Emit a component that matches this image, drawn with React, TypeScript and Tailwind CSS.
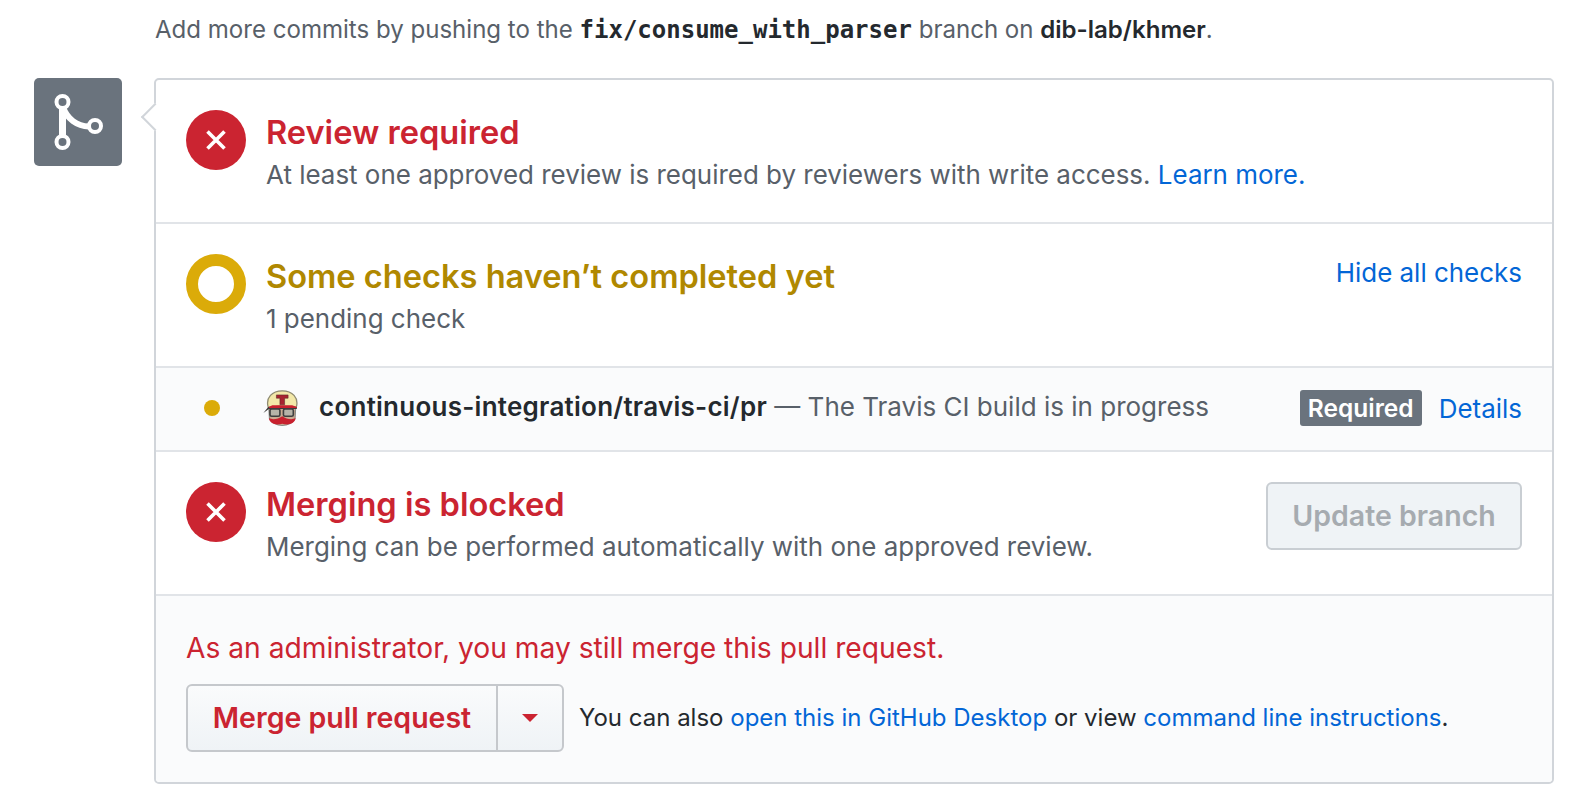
import React from "react";

function XCircle() {
  return (
    <div className="w-[60px] h-[60px] rounded-full bg-[#cb2431] flex items-center justify-center shrink-0">
      <svg width="22" height="22" viewBox="0 0 22 22">
        <path d="M2.5 2.5 L19.5 19.5 M19.5 2.5 L2.5 19.5" stroke="#fff" strokeWidth="3.6" fill="none" />
      </svg>
    </div>
  );
}

function Travis() {
  return (
    <svg width="35" height="36" viewBox="0 0 30 33" preserveAspectRatio="none" className="shrink-0">
      <path d="M4.5 16 C2 7 8 0.8 16.5 0.8 C25 0.8 31 7 28.5 16 Z" fill="#f3e8a8" stroke="#8f8b72" strokeWidth="1.1" />
      <path d="M11.5 4.5 H21.5 V7.5 H18.5 V13.5 H14.5 V7.5 H11.5 Z" fill="#a8242f" stroke="#5a2a2a" strokeWidth="0.5" />
      <path d="M5 17 H28 L27.5 26 C26 30 21 32.5 16.5 32.5 C12 32.5 7 30 5.5 26 Z" fill="#c9ab92" stroke="#8a8a85" strokeWidth="0.9" />
      <path d="M0.3 21 L4.5 15.5 C12 14 21 14 29 15.5 V17.5 H5 Z" fill="#3a3a3a" />
      <path d="M5 15.5 L8 14 H25 L29 15.5 V16.6 H5 Z" fill="#c8202e" />
      <rect x="6" y="17.5" width="8.5" height="6.5" rx="1.4" fill="#b6b3a8" stroke="#3f3f3f" strokeWidth="1.4" />
      <rect x="17.5" y="17.5" width="8.5" height="6.5" rx="1.4" fill="#b6b3a8" stroke="#3f3f3f" strokeWidth="1.4" />
      <path d="M5 26 C9 27.5 13 26.5 16.5 24 C20 26.5 24 27.5 28 26 C27.5 30.5 22 33 16.5 31 C11 33 5.5 30.5 5 26 Z" fill="#c8202e" />
    </svg>
  );
}

export default function App() {
  return (
    <div className="w-[1580px] h-[804px] overflow-hidden bg-white text-[#586069] text-[25.95px] leading-[36px] font-['Inter','Noto_Sans',sans-serif]">
      <div className="pl-[155px] pt-[12px] h-[78px] text-[24.05px]">
        Add more commits by pushing to the{" "}
        <span className="font-['DejaVu_Sans_Mono','Liberation_Mono',monospace] font-bold text-[#24292e] text-[24px]">fix/consume_with_parser</span>{" "}
        branch on <span className="font-semibold text-[#24292e]">dib-lab/khmer</span>.
      </div>

      <div className="flex pl-[34px]">
        <div className="w-[88px] h-[88px] rounded-[5px] bg-[#6a737d] flex items-center justify-center shrink-0">
          <svg width="50" height="58" viewBox="0 0 50 58" fill="none" stroke="#fff">
            <path d="M9.5 12 V46" strokeWidth="7" />
            <path d="M10 14 C14 26 24 33 36 33.5" strokeWidth="6" />
            <circle cx="9.5" cy="9" r="6" strokeWidth="4" fill="#6a737d" />
            <circle cx="9.5" cy="49" r="6" strokeWidth="4" fill="#6a737d" />
            <circle cx="42" cy="33" r="6" strokeWidth="4" fill="#6a737d" />
          </svg>
        </div>

        <div className="relative ml-[32px] w-[1400px] h-[706px] border-2 border-[#d1d5da] rounded-[5px] flex flex-col">
          <div className="absolute left-[-11px] top-[27px] w-[20px] h-[20px] rotate-45 bg-white border-l-2 border-b-2 border-[#d1d5da]" />

          <div className="relative h-[144px] border-b-2 border-[#e1e4e8] flex gap-[20px] pl-[30px] pt-[30px]">
            <XCircle />
            <div>
              <div className="text-[#cb2431] text-[32.6px] font-semibold leading-[44px] h-[45px]">Review required</div>
              <div className="leading-[40px]">
                At least one approved review is required by reviewers with write access.{" "}
                <span className="text-[#0366d6]">Learn more.</span>
              </div>
            </div>
          </div>

          <div className="h-[144px] border-b-2 border-[#e1e4e8] flex gap-[20px] pl-[30px] pr-[30px] pt-[30px]">
            <div className="w-[60px] h-[60px] rounded-full border-[12px] border-[#dbab09] shrink-0" />
            <div className="flex-1">
              <div className="text-[#b08800] text-[32.6px] font-semibold leading-[44px] h-[45px]">Some checks haven’t completed yet</div>
              <div className="leading-[40px]">1 pending check</div>
            </div>
            <div className="text-[#0366d6] mt-[1px]">Hide all checks</div>
          </div>

          <div className="h-[84px] border-b-2 border-[#e1e4e8] bg-[#fafbfc] flex items-center pl-[48px] pr-[30px]">
            <div className="w-[16px] h-[16px] rounded-full bg-[#dbab09] shrink-0 -mt-[2px]" />
            <div className="ml-[43px] flex -mt-[2px]"><Travis /></div>
            <div className="ml-[21px] flex-1 -mt-[4px] whitespace-nowrap text-[26px]">
              <span className="font-semibold text-[#24292e] tracking-[0.25px]">continuous-integration/travis-ci/pr</span> — The Travis CI build is in progress
            </div>
            <div className="bg-[#6a737d] text-white text-[24.5px] font-semibold rounded-[3px] h-[36px] w-[122px] flex items-center justify-center -mt-[2px]">Required</div>
            <div className="ml-[17px] text-[#0366d6]">Details</div>
          </div>

          <div className="h-[144px] border-b-2 border-[#e1e4e8] flex gap-[20px] pl-[30px] pr-[30px] pt-[30px]">
            <XCircle />
            <div className="flex-1">
              <div className="text-[#cb2431] text-[32.6px] font-semibold leading-[44px] h-[45px]">Merging is blocked</div>
              <div className="leading-[40px]">Merging can be performed automatically with one approved review.</div>
            </div>
            <div className="w-[256px] h-[68px] rounded-[6px] border-2 border-[#c9ced3] bg-[#eff3f6] text-[#a6abb0] text-[28.5px] font-semibold flex items-center justify-center">Update branch</div>
          </div>

          <div className="flex-1 bg-[#fafbfc] rounded-b-[4px] pl-[30px] pt-[32px]">
            <div className="text-[#cb2431] text-[28.2px] leading-[40px]">As an administrator, you may still merge this pull request.</div>
            <div className="flex items-center mt-[16px]">
              <div className="flex h-[68px] rounded-[6px] border-2 border-[#c5c8cc] bg-gradient-to-b from-[#fafbfc] to-[#eff3f6]">
                <div className="w-[308px] flex items-center justify-center text-[#cb2431] text-[28.5px] font-semibold">Merge pull request</div>
                <div className="w-[66px] border-l-2 border-[#c5c8cc] flex items-center justify-center">
                  <svg width="16" height="8" viewBox="0 0 16 8"><path d="M0 0 H16 L8 8 Z" fill="#cb2431" /></svg>
                </div>
              </div>
              <div className="ml-[15px] text-[#24292e] text-[24px]">
                You can also <span className="text-[#0366d6]">open this in GitHub Desktop</span> or view{" "}
                <span className="text-[#0366d6]">command line instructions</span>.
              </div>
            </div>
          </div>
        </div>
      </div>
    </div>
  );
}
